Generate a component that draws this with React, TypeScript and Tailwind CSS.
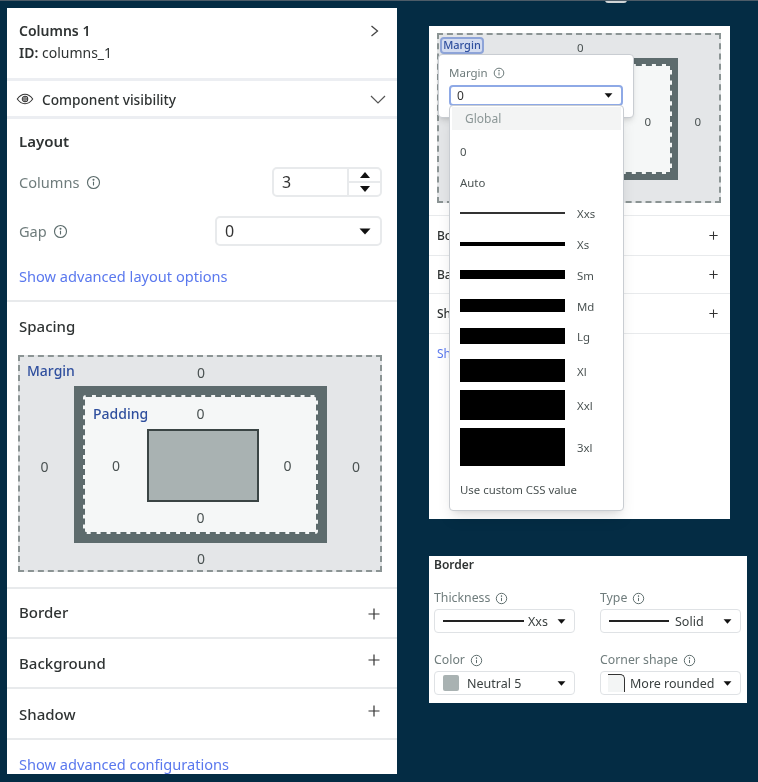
import React from "react";

function Info({ size = 14 }: { size?: number }) {
  return (
    <svg width={size} height={size} viewBox="0 0 16 16" fill="none" stroke="#5b6b6b" strokeWidth="1.2" className="shrink-0">
      <circle cx="8" cy="8" r="6.4" />
      <path d="M8 7.2v4" />
      <circle cx="8" cy="5" r="0.5" fill="#5b6b6b" />
    </svg>
  );
}

function Caret({ className = "" }: { className?: string }) {
  return (
    <svg width="12" height="7" viewBox="0 0 12 7" className={className}>
      <path d="M0.5 0.5h11L6 6.500z" fill="#111" />
    </svg>
  );
}

function SectionRow({ label, h, plus, text }: { label: string; h: string; plus: string; text: string }) {
  return (
    <div className={`${h} flex items-center justify-between pl-[12px] pr-[17px] border-b-2 border-[#e8eaec]`}>
      <span className={`text-[15px] font-medium text-[#2f3333] ${text}`}>{label}</span>
      <svg width="12" height="12" viewBox="0 0 12 12" stroke="#333" strokeWidth="1.2" className={plus}>
        <path d="M6 0.500v11M0.500 6h11" />
      </svg>
    </div>
  );
}

function LeftSpacing() {
  return (
    <div className="ml-[11px] w-[364px] h-[217px] border-2 border-dashed border-[#8b9494] bg-[#e4e6e8] grid grid-cols-[54px_253px_1fr] grid-rows-[29px_157px_1fr] text-[14px] text-[#4a5252]">
      <div className="col-span-3 relative flex items-center justify-center">
        <span className="absolute left-[7px] top-[3px] text-[14px] font-medium text-[#2f4f9e]">Margin</span>
        <span className="ml-[2px] mt-[1px]">0</span>
      </div>
      <div className="flex items-center justify-center pr-[5px] mt-[3px]">0</div>
      <div className="bg-[#5d6b6d] p-[9px]">
        <div className="h-full border-2 border-dashed border-[#5d6b6d] rounded-[3px] bg-[#f5f7f7] grid grid-cols-[62px_112px_1fr] grid-rows-[32px_73px_1fr]">
          <div className="col-span-3 relative flex items-center justify-center">
            <span className="absolute left-[8px] top-[6px] text-[14px] font-medium text-[#2f4f9e]">Padding</span>
            <span className="mt-[1px]">0</span>
          </div>
          <div className="flex items-center justify-center">0</div>
          <div className="bg-[#a9b2b2] border-2 border-[#3a4444]" />
          <div className="flex items-center justify-center">0</div>
          <div className="col-span-3 flex items-center justify-center mt-[1px]">0</div>
        </div>
      </div>
      <div className="flex items-center justify-center pl-[5px] mt-[3px]">0</div>
      <div className="col-span-3 flex items-center justify-center ml-[2px] mt-[3px]">0</div>
    </div>
  );
}

function LeftPanel() {
  return (
    <div className="w-[390px] h-[766px] bg-white overflow-hidden shrink-0">
      <div className="h-[73px] pl-[12px] pr-[18px] pt-[12px] flex justify-between border-b-[3px] border-[#eceef2]">
        <div className="leading-[22px] text-[14px] text-[#2f3333]">
          <div className="font-semibold">Columns 1</div>
          <div><span className="font-semibold">ID:</span> columns_1</div>
        </div>
        <svg width="9" height="12" viewBox="0 0 9 12" fill="none" stroke="#444" strokeWidth="1.3" className="mt-[5px]">
          <path d="M1.500 1l6 5-6 5" />
        </svg>
      </div>
      <div className="h-[38px] pl-[8px] pr-[11px] flex items-center border-b-[3px] border-[#eceef2]">
        <svg width="18" height="12" viewBox="0 0 20 14" fill="none" stroke="#333" strokeWidth="1.2" className="mt-[1px] ml-[1px]">
          <path d="M1 7c2.500-3.500 5.500-5.500 9-5.500S16.500 3.500 19 7c-2.500 3.500-5.500 5.500-9 5.500S3.500 10.500 1 7z" />
          <circle cx="10" cy="7" r="3.200" />
          <circle cx="10" cy="7" r="1.500" />
        </svg>
        <span className="ml-[8px] mt-[4px] text-[13.7px] font-medium text-[#2f3333]">Component visibility</span>
        <svg width="16" height="9" viewBox="0 0 16 9" fill="none" stroke="#555" strokeWidth="1.2" className="ml-auto mt-[2px]">
          <path d="M1 1l7 7 7-7" />
        </svg>
      </div>
      <div className="h-[183px] pl-[12px] pr-[11px] pt-[12px] border-b-2 border-[#e8eaec]">
        <div className="text-[15px] font-semibold text-[#2f3333] leading-[20px]">Layout</div>
        <div className="mt-[16px] flex items-center justify-between h-[30px]">
          <div className="flex items-center gap-[6px] mt-[2px] text-[14.6px] text-[#6f7c7c]">Columns <Info size={15} /></div>
          <div className="mr-[4px] w-[110px] h-[30px] border-2 border-[#e8eaec] rounded-[5px] flex items-center">
            <span className="flex-1 pl-[8px] text-[16px] text-[#333]">3</span>
            <div className="w-[33px] h-full border-l-2 border-[#e8eaec] flex flex-col">
              <div className="flex-1 flex items-center justify-center border-b-2 border-[#e8eaec]">
                <svg width="10" height="6" viewBox="0 0 10 6"><path d="M5 0l5 6H0z" fill="#111" /></svg>
              </div>
              <div className="flex-1 flex items-center justify-center">
                <svg width="10" height="6" viewBox="0 0 10 6"><path d="M0 0h10L5 6z" fill="#111" /></svg>
              </div>
            </div>
          </div>
        </div>
        <div className="mt-[19px] flex items-center justify-between h-[30px]">
          <div className="flex items-center gap-[6px] mt-[2px] text-[14.6px] text-[#6f7c7c]">Gap <Info size={15} /></div>
          <div className="mr-[4px] w-[167px] h-[30px] border-2 border-[#e8eaec] rounded-[5px] flex items-center justify-between pl-[8px] pr-[9px]">
            <span className="text-[16px] text-[#333]">0</span>
            <Caret />
          </div>
        </div>
        <div className="mt-[20px] text-[14.6px] text-[#5a78ee] leading-[20px]">Show advanced layout options</div>
      </div>
      <div className="h-[287px] pt-[14px] border-b-2 border-[#e8eaec]">
        <div className="px-[12px] text-[15px] font-medium text-[#2f3333] leading-[20px] mb-[19px]">Spacing</div>
        <LeftSpacing />
      </div>
      <SectionRow label="Border" h="h-[50px]" plus="mt-[2px]" text="-mt-[2px]" />
      <SectionRow label="Background" h="h-[50px]" plus="-mt-[6px]" text="mt-0" />
      <SectionRow label="Shadow" h="h-[51px]" plus="-mt-[6px]" text="mt-[2px]" />
      <div className="pl-[12px] pt-[14px] text-[14.6px] text-[#5a78ee] leading-[20px]">Show advanced configurations</div>
    </div>
  );
}

const sizes = [
  { label: "Xxs", row: "h-[2px] mt-[14px]", bg: "bg-[#333]" },
  { label: "Xs", row: "h-[4px] mt-[28px]", bg: "bg-black" },
  { label: "Sm", row: "h-[9px] mt-[24px]", bg: "bg-black" },
  { label: "Md", row: "h-[13px] mt-[20px]", bg: "bg-black" },
  { label: "Lg", row: "h-[16px] mt-[16px]", bg: "bg-black" },
  { label: "Xl", row: "h-[23px] mt-[15px]", bg: "bg-black" },
  { label: "Xxl", row: "h-[30px] mt-[8px]", bg: "bg-black" },
  { label: "3xl", row: "h-[38px] mt-[8px]", bg: "bg-black" },
];

function MarginPopover() {
  return (
    <>
      <div className="absolute left-[11px] top-[11px] w-[44px] h-[17px] rounded-[4px] border-2 border-[#8ea4d8] bg-[#d3dcf0] flex items-center justify-center text-[11px] font-medium text-[#2f4f9e]">
        Margin
      </div>
      <div className="absolute left-[9px] top-[28px] w-[196px] h-[64px] bg-white rounded-[4px] border border-[#c9cdd2] shadow-md px-[10px] pt-[9px]">
        <div className="flex items-center gap-[5px] text-[11.5px] text-[#6f7c7c] leading-[18px]">Margin <Info size={12} /></div>
        <div className="mt-[3px] w-[174px] h-[21px] border-2 border-[#8ea9e6] rounded-[4px] flex items-center justify-between pl-[6px] pr-[8px] text-[12px] text-[#333]">
          0
          <Caret className="w-[9px] h-[5px]" />
        </div>
      </div>
      <div className="absolute left-[20px] top-[79px] w-[175px] h-[406px] bg-white rounded-[4px] border border-[#c9cdd2] shadow-lg">
        <div className="mx-[2px] mt-[1px] h-[23px] bg-[#f3f4f4] pl-[13px] flex items-center text-[12px] text-[#8b9696]">Global</div>
        <div className="pl-[10px] pr-[8px] text-[11.4px] text-[#4a5252]">
          <div className="h-[32px] mt-[6px] flex items-center">0</div>
          <div className="h-[30px] flex items-center">Auto</div>
          {sizes.map((s) => (
            <div key={s.label} className={`flex items-center ${s.row}`}>
              <div className={`w-[105px] h-full ${s.bg} shrink-0`} />
              <span className="ml-[12px] mt-[2px] leading-none">{s.label}</span>
            </div>
          ))}
          <div className="mt-[16px] leading-[16px]">Use custom CSS value</div>
        </div>
      </div>
    </>
  );
}

function SmallRow({ label, h }: { label: string; h: string }) {
  return (
    <div className={`${h} flex items-center justify-between pl-[8px] pr-[12px] border-b border-[#e8eaec] text-[12px] font-medium text-[#2f3333]`}>
      {label}
      <svg width="9" height="9" viewBox="0 0 12 12" stroke="#333" strokeWidth="1.4">
        <path d="M6 0.500v11M0.500 6h11" />
      </svg>
    </div>
  );
}

function MarginPanel() {
  return (
    <div className="relative w-[301px] h-[493px] bg-white">
      <div className="pt-[7px] pl-[8px] pr-[9px] pb-[12px] border-b border-[#e8eaec]">
        <div className="h-[170px] border-2 border-dashed border-[#8b9494] bg-[#e4e6e8] pr-[41px] pt-[23px] pb-[21px] relative text-[11.5px] text-[#4a5252]">
          <span className="absolute left-[138px] top-[4px]">0</span>
          <span className="absolute right-[18px] top-[78px]">0</span>
          <div className="ml-[40px] h-full bg-[#5d6b6d] p-[6px]">
            <div className="h-full border-2 border-dashed border-[#5d6b6d] bg-[#f5f7f7] relative">
              <span className="absolute right-[19px] top-[47px]">0</span>
            </div>
          </div>
        </div>
      </div>
      <SmallRow label="Border" h="h-[40px]" />
      <SmallRow label="Background" h="h-[38px]" />
      <SmallRow label="Shadow" h="h-[40px]" />
      <div className="pl-[8px] pt-[11px] text-[12px] text-[#5a78ee]">Show advanced configurations</div>
      <MarginPopover />
    </div>
  );
}

function Field({ label, children }: { label: string; children: React.ReactNode }) {
  return (
    <div className="w-[141px]">
      <div className="mt-[1px] flex items-center gap-[5px] text-[12.3px] text-[#6f7c7c] leading-[18px]">
        {label} <Info size={13} />
      </div>
      <div className="mt-[2px] h-[24px] border border-[#dfe2e5] rounded-[4px] flex items-center text-[12.5px] text-[#3a4040] pl-[8px] pr-[8px]">
        {children}
      </div>
    </div>
  );
}

function BorderPanel() {
  return (
    <div className="w-[318px] h-[147px] bg-white px-[5px] pt-[1px]">
      <div className="text-[12px] font-semibold text-[#2f3333] leading-[16px]">Border</div>
      <div className="mt-[15px] grid grid-cols-[141px_141px] gap-x-[25px] gap-y-[17px]">
        <Field label="Thickness">
          <div className="w-[81px] h-[2px] bg-[#222]" />
          <span className="ml-[4px] mt-[2px]">Xxs</span>
          <Caret className="ml-auto w-[9px] h-[5px]" />
        </Field>
        <Field label="Type">
          <div className="w-[60px] h-[2px] bg-[#222]" />
          <span className="ml-[6px] mt-[2px]">Solid</span>
          <Caret className="ml-auto w-[9px] h-[5px]" />
        </Field>
        <Field label="Color">
          <div className="w-[16px] h-[16px] rounded-[2px] bg-[#a9b2b2]" />
          <span className="ml-[8px] mt-[2px]">Neutral 5</span>
          <Caret className="ml-auto w-[9px] h-[5px]" />
        </Field>
        <Field label="Corner shape">
          <div className="w-[17px] h-[18px] bg-[#f3f5f5] border-t border-r border-[#333] rounded-tr-[5px] -ml-[1px]" />
          <span className="ml-[5px] mt-[2px]">More rounded</span>
          <Caret className="ml-auto w-[9px] h-[5px]" />
        </Field>
      </div>
    </div>
  );
}

export default function App() {
  return (
    <div className="relative w-[758px] h-[782px] bg-[#042c44] border-t border-[#4d5c68] overflow-hidden flex pl-[7px] pt-[7px] blur-[0.35px] font-['Noto_Sans',sans-serif]">
      <div className="absolute left-[605px] -top-[1px] w-[22px] h-[3px] rounded-b-full bg-[#d0d4d6]" />
      <LeftPanel />
      <div className="ml-[32px] mt-[18px] flex flex-col gap-[37px]">
        <MarginPanel />
        <BorderPanel />
      </div>
    </div>
  );
}
